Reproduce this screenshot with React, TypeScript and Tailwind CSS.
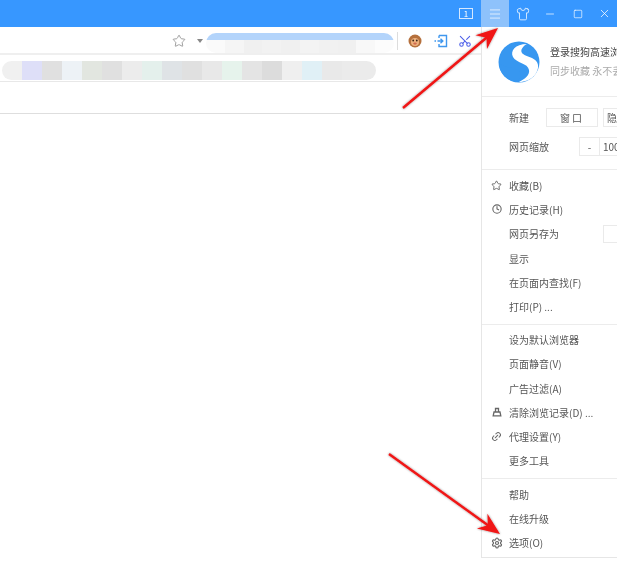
import React from 'react';
import { Star, Clock, Link2, Settings, Scissors, Minus, Square, X, Menu, Shirt } from 'lucide-react';

const CJK = { fontFamily: '"Noto Sans CJK SC", "Liberation Sans", sans-serif' };

const bookmarkBlocks = [
	{ w: 'w-[20px]', c: 'bg-[#f0f0f0]' },
	{ w: 'w-[20px]', c: 'bg-[#dedff8]' },
	{ w: 'w-[20px]', c: 'bg-[#e0e0e0]' },
	{ w: 'w-[20px]', c: 'bg-[#edf2f6]' },
	{ w: 'w-[20px]', c: 'bg-[#e2e6e0]' },
	{ w: 'w-[20px]', c: 'bg-[#e0e0e0]' },
	{ w: 'w-[20px]', c: 'bg-[#ececec]' },
	{ w: 'w-[20px]', c: 'bg-[#e4f0ec]' },
	{ w: 'w-[20px]', c: 'bg-[#dfe3e6]' },
	{ w: 'w-[20px]', c: 'bg-[#e0e0e0]' },
	{ w: 'w-[20px]', c: 'bg-[#e8e8e8]' },
	{ w: 'w-[20px]', c: 'bg-[#e6f3ec]' },
	{ w: 'w-[20px]', c: 'bg-[#e4e4e4]' },
	{ w: 'w-[20px]', c: 'bg-[#dcdcdc]' },
	{ w: 'w-[20px]', c: 'bg-[#efefef]' },
	{ w: 'w-[20px]', c: 'bg-[#e0f0f6]' },
	{ w: 'w-[20px]', c: 'bg-[#e9e9e9]' },
	{ w: 'w-[34px]', c: 'bg-[#ebebeb]' },
];

const addressBlocks = ['bg-[#fafafa]', 'bg-[#f5f5f5]', 'bg-[#f0f0f0]', 'bg-[#f2f2f2]', 'bg-[#f0f0f0]', 'bg-[#f3f3f3]', 'bg-[#f1f1f1]', 'bg-[#f0f0f0]', 'bg-[#f8f8f8]', 'bg-[#fcfcfc]'];

const Row = ({ label, icon }: { label: string; icon?: React.ReactNode }) => (
	<div className="flex h-[24.3px] items-center">
		<span className="flex w-[27px] shrink-0 justify-center pl-[2px] text-[#666]">{icon}</span>
		<span className="whitespace-nowrap text-[10px] text-[#555]">{label}</span>
	</div>
);

const Divider = ({ className }: { className: string }) => <div className={`h-px bg-[#ececec] ${className}`} />;

const Arrow = ({ x1, y1, x2, y2, id }: { x1: number; y1: number; x2: number; y2: number; id: string }) => {
	const a = Math.atan2(y2 - y1, x2 - x1);
	const p = (d: number, o: number) => `${x2 - d * Math.cos(a) - o * Math.sin(a)},${y2 - d * Math.sin(a) + o * Math.cos(a)}`;
	return (
		<g filter={`url(#${id})`}>
			<line x1={x1} y1={y1} x2={x2 - 14 * Math.cos(a)} y2={y2 - 14 * Math.sin(a)} stroke="#f01414" strokeWidth="2.4" />
			<polygon points={`${x2},${y2} ${p(22, 9)} ${p(15, 0)} ${p(22, -9)}`} fill="#f01414" />
		</g>
	);
};

const App: React.FC = () => {
	return (
		<div className="relative h-[563px] w-[617px] overflow-hidden bg-white blur-[0.35px]" style={CJK}>
			<div className="flex h-[27px] items-center justify-end bg-[#3797ff] text-white">
				<div className="mr-[8px] flex h-[11px] w-[14px] items-center justify-center border border-[#d5e8ff] text-[8px] leading-none">1</div>
				<div className="flex h-[27px] w-[28px] items-center justify-center bg-[#8ec2fb]">
					<Menu size={14} strokeWidth={1.2} />
				</div>
				<div className="flex w-[27px] justify-center">
					<Shirt size={14} strokeWidth={1.3} />
				</div>
				<div className="flex w-[28px] justify-center">
					<Minus size={12} strokeWidth={1.4} />
				</div>
				<div className="flex w-[28px] justify-center">
					<Square size={10} strokeWidth={1.6} />
				</div>
				<div className="flex w-[25px] justify-center">
					<X size={13} strokeWidth={1.4} />
				</div>
			</div>

			<div className="flex h-[28px] items-center border-b-2 border-[#efefef] pl-[172px] pt-[2px]">
				<Star size={14} strokeWidth={1.6} className="shrink-0 text-[#999]" />
				<div className="ml-[11px] h-0 w-0 shrink-0 border-x-[3px] border-t-[4px] border-x-transparent border-t-[#888]" />
				<div className="ml-[3px] mt-[4px] w-[188px] shrink-0 overflow-hidden rounded-full">
					<div className="h-[7px] bg-[#b3d4fb]" />
					<div className="flex h-[13px]">
						{addressBlocks.map((c, i) => (
							<div key={i} className={`h-full w-[20px] ${c}`} />
						))}
					</div>
				</div>
				<div className="ml-[3px] h-[18px] w-px shrink-0 bg-[#ddd]" />
				<svg width="14" height="14" viewBox="0 0 14 14" className="ml-[10px] shrink-0">
					<circle cx="7" cy="7" r="6.5" fill="#b5703c" />
					<circle cx="7" cy="8" r="4" fill="#eeb27f" />
					<circle cx="5.2" cy="6.5" r="0.9" fill="#3b2415" />
					<circle cx="8.8" cy="6.5" r="0.9" fill="#3b2415" />
					<ellipse cx="7" cy="9.6" rx="1.8" ry="1.1" fill="#d06a50" />
				</svg>
				<svg width="14" height="14" viewBox="0 0 14 14" fill="none" stroke="#3f97ee" strokeWidth="1.4" className="ml-[12px] shrink-0">
					<path d="M5 1.5 H12.5 V12.5 H5 V10" />
					<path d="M5 1.5 V4" />
					<path d="M0.5 7 H2 M3.5 7 H8.5 M6.5 4.8 L8.8 7 L6.5 9.2" />
				</svg>
				<Scissors size={14} strokeWidth={1.8} className="ml-[10px] shrink-0 -rotate-90 text-[#4b5ee8]" />
			</div>

			<div className="flex h-[27px] items-center border-b border-[#e8e8e8] pl-[2px] pt-[4px]">
				<div className="flex h-[19px] w-[374px] shrink-0 overflow-hidden rounded-full">
					{bookmarkBlocks.map((b, i) => (
						<div key={i} className={`h-full ${b.w} ${b.c}`} />
					))}
				</div>
			</div>

			<div className="h-[32px] border-b border-[#dedede]" />

			<div className="absolute left-[481px] top-[27px] h-[531px] w-[136px] overflow-hidden border-b border-l border-[#e6e6e6] bg-white">
				<div className="flex h-[70px] items-center border-b border-[#ececec] pl-[16px]">
					<svg width="42" height="42" viewBox="0 0 42 42" className="shrink-0">
						<circle cx="21" cy="21" r="20.5" fill="#3797f0" />
						<path d="M29 3 C17 3 12 10 15 16 C18 22 30 22 31 29 C32 34 27 38 21 41 C33 41 41 32 40 24 C39 16 27 16 24 12 C22 9 25 5 29 3 Z" fill="#fff" />
						<path d="M1 22 C6 27 14 26 20 29 C24 31 24 36 19 41 C9 40 1 32 1 22 Z" fill="#3797f0" />
					</svg>
					<div className="ml-[10px] shrink-0">
						<div className="whitespace-nowrap text-[10px] leading-[14px] text-[#444]">登录搜狗高速浏览器</div>
						<div className="mt-[5px] whitespace-nowrap text-[10px] leading-[14px] text-[#aaa]">同步收藏 永不丢失</div>
					</div>
				</div>

				<div className="flex h-[72px] flex-col pl-[27px] text-[10px] text-[#555]">
					<div className="mt-[11px] flex h-[19px] items-center">
						<span className="w-[37px] shrink-0">新建</span>
						<div className="flex h-[19px] w-[52px] shrink-0 items-center justify-center border border-[#eaeaea] tracking-[2px]">窗口</div>
						<div className="ml-[5px] flex h-[19px] w-[50px] shrink-0 items-center border border-[#eaeaea] pl-[3px]">隐身</div>
					</div>
					<div className="mt-[10px] flex h-[19px] items-center">
						<span className="w-[70px] shrink-0">网页缩放</span>
						<div className="flex h-[19px] w-[21px] shrink-0 items-center justify-center border border-[#eaeaea]">-</div>
						<div className="flex h-[19px] w-[40px] shrink-0 items-center border-y border-[#eaeaea] pl-[3px]">100%</div>
					</div>
				</div>
				<Divider className="" />

				<div className="pt-[3px]">
					<Row label="收藏(B)" icon={<Star size={11} strokeWidth={2} />} />
					<Row label="历史记录(H)" icon={<Clock size={10} strokeWidth={2.6} />} />
					<div className="relative">
						<Row label="网页另存为" />
						<div className="absolute left-[121px] top-[3px] h-[18px] w-[30px] border border-[#eaeaea]" />
					</div>
					<Row label="显示" />
					<Row label="在页面内查找(F)" />
					<Row label="打印(P) ..." />
				</div>
				<Divider className="mt-[5px]" />
				<div className="pt-[2.5px]">
					<Row label="设为默认浏览器" />
					<Row label="页面静音(V)" />
					<Row label="广告过滤(A)" />
					<Row
						label="清除浏览记录(D) ..."
						icon={
							<svg width="10" height="10" viewBox="0 0 10 10" fill="none" stroke="currentColor" strokeWidth="1.3">
								<path d="M3.5 5 V1.5 H6.5 V5 M2 5 H8 L8.8 8.8 H1.2 Z" />
							</svg>
						}
					/>
					<Row label="代理设置(Y)" icon={<Link2 size={11} strokeWidth={2.2} className="-rotate-45" />} />
					<Row label="更多工具" />
				</div>
				<Divider className="mt-[4.5px]" />
				<div className="pt-[3.5px]">
					<Row label="帮助" />
					<Row label="在线升级" />
					<Row label="选项(O)" icon={<Settings size={12} strokeWidth={2.4} />} />
				</div>
			</div>

			<svg className="pointer-events-none absolute inset-0" width="617" height="563">
				<defs>
					<filter id="shadowA" x="-20%" y="-20%" width="140%" height="140%">
						<feDropShadow dx="0" dy="0" stdDeviation="1.2" floodColor="#000" floodOpacity="0.45" />
					</filter>
				</defs>
				<Arrow id="shadowA" x1={403} y1={108} x2={498} y2={28} />
				<Arrow id="shadowA" x1={389} y1={454} x2={500} y2={534} />
			</svg>
		</div>
	);
};

export default App;
